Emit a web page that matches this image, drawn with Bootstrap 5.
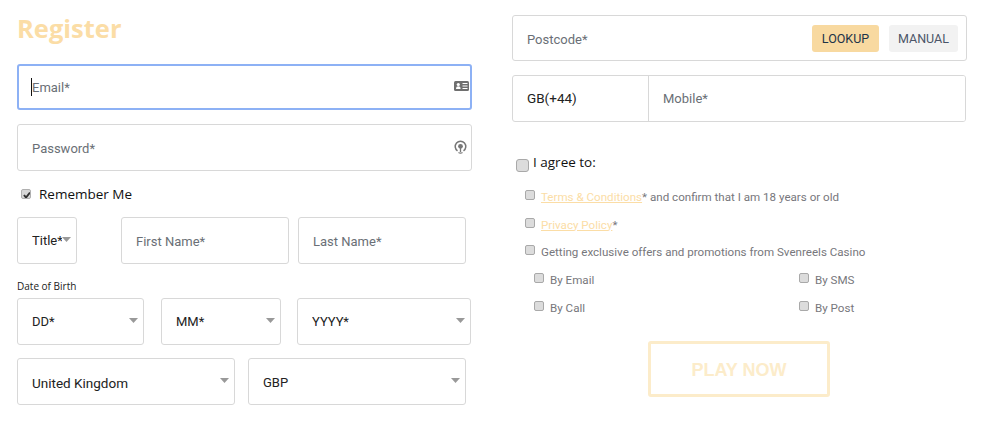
<!DOCTYPE html>
<html lang="en">
<head>
<meta charset="utf-8">
<title>Register</title>
<link href="https://cdn.jsdelivr.net/npm/bootstrap@5.3.0/dist/css/bootstrap.min.css" rel="stylesheet">
<style>
html,body{height:423px;overflow:hidden}
body{font-family:"Open Sans","Noto Sans","Liberation Sans",sans-serif;font-size:14px;color:#111;background:#fff}
.page-wrap{padding:0 17px;gap:40px}
.side-l,.side-r{width:455px;flex:none}
.reg-title{font-size:25.500px;font-weight:700;color:#fbdda6;line-height:30px;margin:13px 0 21px;font-family:"Open Sans",sans-serif}
.field,.form-control.field,.form-select.field{height:47px;border:1px solid #d8d8d8;border-radius:3px;font-family:Roboto,sans-serif;font-size:13px;padding:1px 14px 0;color:#333;box-shadow:none;background-color:#fff;line-height:44px}
.field::placeholder{color:#6a6f76;opacity:1}
.form-control.email-on{border:2px solid #8db1f5;padding-left:13px;height:46px}
.form-select.field{background-size:9px 5px;background-position:right 5px top 19px;color:#222;background-image:url("data:image/svg+xml,%3Csvg xmlns='http://www.w3.org/2000/svg' viewBox='0 0 9 5'%3E%3Cpath d='M0 0h9L4.500 5z' fill='%23999'/%3E%3C/svg%3E")}
.cell{position:relative}
.caret-bar{position:absolute;left:14px;top:14px;width:1px;height:18px;background:#111}
.cell-ico{position:absolute;right:3px;top:17px}
.cell-ico2{position:absolute;right:5px;top:16px}
.gap-14{margin-bottom:14px}
.rem-row{height:46px;padding-left:4px;gap:8px;font-size:13.5px;color:#111;margin-bottom:0}
.tick,.form-check-input.tick{appearance:none;width:10px;height:10px;margin:0;flex:none;border:1px solid #a9a9a9;border-radius:2px;background:#dcdcdc;box-shadow:none;float:none}
.form-check-input.tick:checked{background-color:#d8d8d8;border-color:#b0b0b0;background-size:10px;background-image:url("data:image/svg+xml,%3Csvg xmlns='http://www.w3.org/2000/svg' viewBox='0 0 10 10'%3E%3Cpath d='M2 5l2 2.500L8 2.500' fill='none' stroke='%23333' stroke-width='2'/%3E%3C/svg%3E")}
.w-title{width:60px;flex:none}
.w-first{width:168px;flex:none;margin-left:44px}
.w-last{width:168px;flex:none;margin-left:9px}
.dob-label{font-size:10px;line-height:14px;color:#222;margin:15px 0 5px}
.w-dd{width:127px;flex:none}
.w-mm{width:120px;flex:none;margin-left:17px}
.w-yy{width:174px;flex:none;margin-left:16px}
.form-select.field.w-cn{width:218px;flex:none;font-size:13.500px;padding-top:2px}
.form-select.field.w-cur{width:218px;flex:none;margin-left:13px;padding-top:2px}
.dob-row{margin-bottom:13px}
.form-control.field.post-field{height:46px;margin-top:15px;padding-top:2px}
.btn-look,.btn-man{position:absolute;top:10px;height:27px;padding:0;border:0;border-radius:3px;font-family:Roboto,sans-serif;font-size:12.5px;line-height:27px;color:#33415a}
.btn-look{right:88px;width:67px;background:#f8d9a0;color:#1d3348}
.btn-man{right:9px;width:69px;background:#f2f2f2;color:#4b5568}
.phone-row{height:47px;width:454px;margin:14px 0 0;border:1px solid #d8d8d8;border-radius:3px;overflow:hidden}
.phone-code{width:136px;flex:none;padding-left:14px;border-right:1px solid #d8d8d8;font-family:Roboto,sans-serif;font-size:13.500px;color:#222;line-height:45px}
.form-control.phone-num{height:45px;border:0;border-radius:0;font-family:Roboto,sans-serif;font-size:13px;padding:0 14px;box-shadow:none}
.phone-num::placeholder{color:#6a6f76;opacity:1}
.agree-head{margin:30px 0 0 4px;height:17px;gap:4px;font-size:13.5px;color:#111;align-items:flex-start}
.form-check-input.big-tick{width:13px;height:13px;position:relative;top:7px;border-radius:3px}
.agree-list{font-family:Roboto,sans-serif;font-size:11.600px;color:#77777c;padding-left:13px;margin-top:20px}
.agree-item{height:27.500px;gap:6px;align-items:flex-start;line-height:17px;margin:0}
.agree-item .tick,.opt-cell .tick{margin-top:1px}
.agree-item a{color:#fbdda6}
.opt-row{padding-left:9px}
.opt-cell{height:28px;width:265px;flex:none;gap:6px;align-items:flex-start;line-height:17px;margin:0}
.opt-cell:last-child{width:auto}
.btn-play,.btn.btn-play{display:block;width:182px;height:56px;margin:13px 0 0 136px;border:3px solid #fcecca;border-radius:3px;background:#fff;color:#fcecca;font:700 18px/52px "Liberation Sans",sans-serif;padding:0}
</style>
</head>
<body>
<main class="d-flex page-wrap">
  <form class="side-l">
    <h1 class="reg-title">Register</h1>
    <div class="cell gap-14">
      <input class="form-control field email-on" type="text" placeholder="Email*">
      <span class="caret-bar"></span>
      <svg class="cell-ico" width="15" height="10" viewBox="0 0 15 10"><rect width="15" height="10" rx="1.500" fill="#6f6f6f"/><circle cx="4.300" cy="3.500" r="1.600" fill="#fff"/><path d="M2 8c0-2 1-2.700 2.300-2.700S6.600 6 6.600 8z" fill="#fff"/><path d="M8.500 2.500h5M8.500 5h5M8.500 7.500h5" stroke="#fff"/></svg>
    </div>
    <div class="cell">
      <input class="form-control field" type="password" placeholder="Password*">
      <svg class="cell-ico2" width="13" height="14" viewBox="0 0 13 14"><path d="M3.500 10.800A5.300 5.300 0 1 1 9.500 10.800" fill="none" stroke="#777" stroke-width="1.500"/><circle cx="6.500" cy="6.300" r="2.400" fill="#777"/><path d="M4.500 12.500c1.200.8 2.800.8 4 0M6.500 8v4" fill="none" stroke="#777" stroke-width="1.300"/></svg>
    </div>
    <label class="d-flex align-items-center rem-row"><input class="form-check-input tick" type="checkbox" checked> Remember Me</label>
    <div class="d-flex">
      <select class="form-select field w-title"><option>Title*</option></select>
      <input class="form-control field w-first" type="text" placeholder="First Name*">
      <input class="form-control field w-last" type="text" placeholder="Last Name*">
    </div>
    <div class="dob-label">Date of Birth</div>
    <div class="d-flex dob-row">
      <select class="form-select field w-dd"><option>DD*</option></select>
      <select class="form-select field w-mm"><option>MM*</option></select>
      <select class="form-select field w-yy"><option>YYYY*</option></select>
    </div>
    <div class="d-flex">
      <select class="form-select field w-cn"><option>United Kingdom</option></select>
      <select class="form-select field w-cur"><option>GBP</option></select>
    </div>
  </form>
  <form class="side-r">
    <div class="cell">
      <input class="form-control field post-field" type="text" placeholder="Postcode*">
      <button class="btn btn-look" type="button">LOOKUP</button>
      <button class="btn btn-man" type="button">MANUAL</button>
    </div>
    <div class="d-flex phone-row">
      <div class="phone-code">GB(+44)</div>
      <input class="form-control phone-num" type="text" placeholder="Mobile*">
    </div>
    <label class="d-flex agree-head"><input class="form-check-input tick big-tick" type="checkbox"> I agree to:</label>
    <div class="agree-list">
      <label class="d-flex agree-item"><input class="form-check-input tick" type="checkbox"><span><a href="#">Terms &amp; Conditions</a>* and confirm that I am 18 years or old</span></label>
      <label class="d-flex agree-item"><input class="form-check-input tick" type="checkbox"><span><a href="#">Privacy Policy</a>*</span></label>
      <label class="d-flex agree-item"><input class="form-check-input tick" type="checkbox"><span>Getting exclusive offers and promotions from Svenreels Casino</span></label>
      <div class="opt-row">
        <div class="d-flex">
          <label class="d-flex opt-cell"><input class="form-check-input tick" type="checkbox"><span>By Email</span></label>
          <label class="d-flex opt-cell"><input class="form-check-input tick" type="checkbox"><span>By SMS</span></label>
        </div>
        <div class="d-flex">
          <label class="d-flex opt-cell"><input class="form-check-input tick" type="checkbox"><span>By Call</span></label>
          <label class="d-flex opt-cell"><input class="form-check-input tick" type="checkbox"><span>By Post</span></label>
        </div>
      </div>
    </div>
    <button class="btn btn-play" type="button">PLAY NOW</button>
  </form>
</main>
<script src="https://cdn.jsdelivr.net/npm/bootstrap@5.3.0/dist/js/bootstrap.bundle.min.js"></script>
</body>
</html>
